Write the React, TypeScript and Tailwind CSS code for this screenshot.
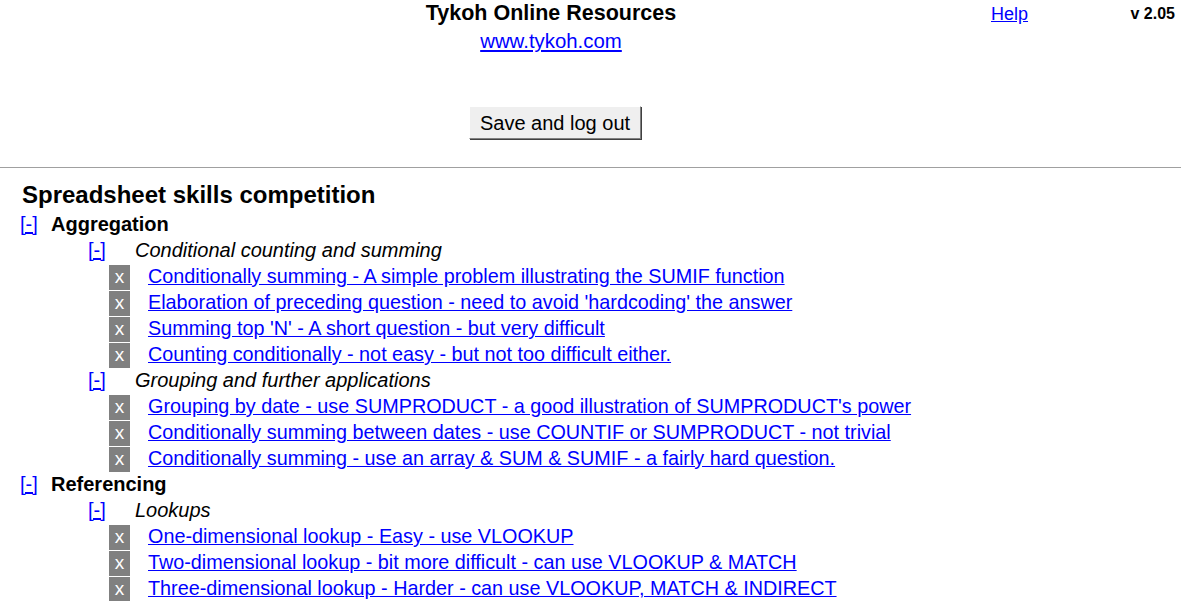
const groups = [
  {
    title: "Aggregation",
    topics: [
      {
        name: "Conditional counting and summing",
        items: [
          "Conditionally summing - A simple problem illustrating the SUMIF function",
          "Elaboration of preceding question - need to avoid 'hardcoding' the answer",
          "Summing top 'N' - A short question - but very difficult",
          "Counting conditionally - not easy - but not too difficult either.",
        ],
      },
      {
        name: "Grouping and further applications",
        items: [
          "Grouping by date - use SUMPRODUCT - a good illustration of SUMPRODUCT's power",
          "Conditionally summing between dates - use COUNTIF or SUMPRODUCT - not trivial",
          "Conditionally summing - use an array & SUM & SUMIF - a fairly hard question.",
        ],
      },
    ],
  },
  {
    title: "Referencing",
    topics: [
      {
        name: "Lookups",
        items: [
          "One-dimensional lookup - Easy - use VLOOKUP",
          "Two-dimensional lookup - bit more difficult - can use VLOOKUP & MATCH",
          "Three-dimensional lookup - Harder - can use VLOOKUP, MATCH & INDIRECT",
        ],
      },
    ],
  },
]

export default function App() {
  return (
    <div className="min-h-screen bg-white text-black font-['Liberation_Sans',Arial,sans-serif]">
      {/* Header */}
      <div className="flex items-start">
        <div className="w-[960px] pl-[142px] flex flex-col items-center">
          <div className="text-[21.5px] font-bold leading-[26px]">Tykoh Online Resources</div>
          <a href="#" className="text-[20.4px] leading-[24px] text-[#0000ff] underline mt-[3px]">
            www.tykoh.com
          </a>
          <button className="mt-[53px] ml-[8px] h-[33px] px-[10px] text-[20px] bg-[#efefef] border border-t-[#ffffff] border-l-[#ffffff] border-r-[#808080] border-b-[#808080] shadow-[1px_1px_0_#404040]">
            Save and log out
          </button>
        </div>
        <a href="#" className="ml-[31px] mt-[3px] text-[18px] leading-[22px] text-[#0000ff] underline">
          Help
        </a>
        <div className="ml-auto mr-[6px] mt-[4px] text-[16px] font-bold leading-[20px]">v 2.05</div>
      </div>

      <hr className="mt-[28px] border-0 border-t border-[#a0a0a0]" />

      {/* Competition tree */}
      <div className="pt-[12px]">
        <h1 className="pl-[22px] text-[24px] font-bold leading-[30px]">Spreadsheet skills competition</h1>
        {groups.map((g) => (
          <div key={g.title}>
            <div className="flex items-center h-[26px] pl-[20px] pt-[2px]">
              <a href="#" className="w-[31px] text-[20px] text-[#0000ff] underline">[-]</a>
              <span className="text-[20px] font-bold">{g.title}</span>
            </div>
            {g.topics.map((t) => (
              <div key={t.name}>
                <div className="flex items-center h-[26px] pl-[88px] pt-[1px]">
                  <a href="#" className="w-[47px] text-[20px] text-[#0000ff] underline">[-]</a>
                  <span className="text-[20px] italic">{t.name}</span>
                </div>
                {t.items.map((item) => (
                  <div key={item} className="flex items-center h-[26px] pl-[109px] pt-[4px]">
                    <span className="w-[21px] h-[25px] bg-[#808080] text-white text-[19px] flex items-center justify-center">
                      x
                    </span>
                    <a href="#" className="ml-[18px] text-[19.8px] text-[#0000ff] underline whitespace-nowrap">
                      {item}
                    </a>
                  </div>
                ))}
              </div>
            ))}
          </div>
        ))}
      </div>
    </div>
  )
}
